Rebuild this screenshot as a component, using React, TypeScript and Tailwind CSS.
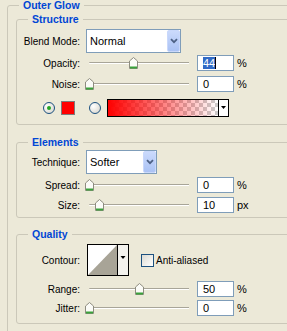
import React from 'react';

type SliderRowProps = {
  label: string;
  value: number;
  unit: string;
  selected?: boolean;
  className?: string;
};

const Label = ({ children }: { children: React.ReactNode }) => (
  <div className="w-[63px] shrink-0 text-right">{children}</div>
);

const Thumb = () => (
  <svg width="9" height="12" viewBox="0 0 9 12">
    <polygon points="0.5,4 4.5,0.5 8.5,4 8.5,11.5 0.5,11.5" fill="#fbfbf7" stroke="#8e8c80" />
    <rect x="1" y="9.5" width="7" height="2" fill="#3aa23a" />
  </svg>
);

const SliderRow = ({ label, value, unit, selected, className }: SliderRowProps) => (
  <div className={`flex h-[16px] items-center ${className ?? ''}`}>
    <Label>{label}</Label>
    <div className="relative ml-[6px] h-[16px] w-[111px] shrink-0">
      <div className="absolute left-[3px] top-[7px] h-[2px] w-[100px] rounded-l-full border-t border-[#a8a598] bg-white" />
      <div className="absolute top-[2px] h-[12px] w-[9px]" style={{ left: value - 1 }}>
        <Thumb />
      </div>
    </div>
    <div className="flex h-[16px] w-[37px] shrink-0 items-center border border-[#7f9db9] bg-white pl-[5px] text-[11px]">
      {selected ? (
        <>
          <span className="bg-[#316ac5] leading-[12px] text-white">{value}</span>
          <span className="h-[12px] w-[1px] bg-black" />
        </>
      ) : (
        <span>{value}</span>
      )}
    </div>
    <span className="ml-[3px] text-[11px]">{unit}</span>
  </div>
);

const Chevron = () => (
  <svg width="8" height="6" viewBox="0 0 8 6">
    <path d="M1 1.2 L4 4.2 L7 1.2" fill="none" stroke="#4d6185" strokeWidth="1.8" />
  </svg>
);

const Combo = ({ value, className }: { value: string; className: string }) => (
  <div className={`ml-[6px] flex h-[24px] shrink-0 items-center border border-[#7f9db9] bg-white text-[11px] ${className}`}>
    <span className="flex-1 pl-[3px]">{value}</span>
    <div className="flex h-[22px] w-[13px] items-center justify-center rounded-[2px] border border-[#c9d8fb] bg-gradient-to-b from-[#cbdafc] to-[#aac2f4]">
      <Chevron />
    </div>
  </div>
);

const Radio = ({ checked }: { checked?: boolean }) => (
  <svg width="12" height="12" viewBox="0 0 12 12">
    <defs>
      <radialGradient id={checked ? 'r1' : 'r2'} cx="0.35" cy="0.35" r="0.8">
        <stop offset="0" stopColor="#ffffff" />
        <stop offset="1" stopColor="#d6d4cb" />
      </radialGradient>
    </defs>
    <circle cx="6" cy="6" r="5.5" fill={`url(#${checked ? 'r1' : 'r2'})`} stroke="#1c5180" />
    {checked && <circle cx="6" cy="6" r="2" fill="#24a524" />}
  </svg>
);

const GradientPreview = () => (
  <svg width="122" height="18" viewBox="0 0 122 18">
    <defs>
      <pattern id="checker" width="8" height="8" patternUnits="userSpaceOnUse">
        <rect width="8" height="8" fill="#ffffff" />
        <rect width="4" height="4" fill="#cccccc" />
        <rect x="4" y="4" width="4" height="4" fill="#cccccc" />
      </pattern>
      <linearGradient id="fade" x1="0" x2="1" y1="0" y2="0">
        <stop offset="0" stopColor="#ff0000" stopOpacity="1" />
        <stop offset="1" stopColor="#ff0000" stopOpacity="0" />
      </linearGradient>
    </defs>
    <rect x="1" y="1" width="110" height="16" fill="url(#checker)" />
    <rect x="1" y="1" width="110" height="16" fill="url(#fade)" />
    <rect x="111" y="1" width="10" height="16" fill="#ffffff" />
    <line x1="111.5" y1="1" x2="111.5" y2="17" stroke="#000" />
    <polygon points="114,7 119,7 116.5,10" fill="#000" />
    <rect x="0.5" y="0.5" width="121" height="17" fill="none" stroke="#000" />
  </svg>
);

const ContourPreview = () => (
  <svg width="42" height="32" viewBox="0 0 42 32">
    <rect x="0.5" y="0.5" width="41" height="31" fill="#ffffff" />
    <polygon points="1,31 30,1 30,31" fill="#a8a497" />
    <rect x="31" y="1" width="10" height="30" fill="#f3f2ed" />
    <line x1="30.5" y1="1" x2="30.5" y2="31" stroke="#000" />
    <polygon points="33.5,12 38.5,12 36,15" fill="#000" />
    <rect x="0.5" y="0.5" width="41" height="31" fill="none" stroke="#000" />
  </svg>
);

type GroupProps = {
  title: string;
  className?: string;
  children: React.ReactNode;
};

// XP style group box: border with the title sitting over its top edge
const GroupBox = ({ title, className, children }: GroupProps) => (
  <div className={`relative rounded-[3px] border border-[#cbc8b9] ${className ?? ''}`}>
    <span className="absolute left-[11px] top-[-7px] bg-[#ece9d8] px-[4px] text-[10.5px] font-bold leading-[12px] text-[#0046d5]">
      {title}
    </span>
    {children}
  </div>
);

export default function App() {
  return (
    <div className="h-[331px] w-[287px] overflow-hidden bg-[#ece9d8] pt-[5px] font-['Liberation_Sans',Arial,sans-serif] text-[10px] leading-[13px] text-black">
      <GroupBox title="Outer Glow" className="ml-[7px] w-[320px] pb-[10px]">
        <GroupBox title="Structure" className="ml-[8px] mt-[13px] pb-[7px]">
          <div className="mt-[9px] flex items-center">
            <Label>Blend Mode:</Label>
            <Combo value="Normal" className="w-[95px]" />
          </div>
          <SliderRow className="mt-[2px]" label="Opacity:" value={44} unit="%" selected />
          <SliderRow className="mt-[5px]" label="Noise:" value={0} unit="%" />
          <div className="mt-[7px] flex h-[18px] items-center">
            <div className="ml-[26px] flex">
              <Radio checked />
            </div>
            <div className="ml-[6px] h-[14px] w-[14px] border border-[#7c7c7c] bg-[#ff0000]" />
            <div className="ml-[14px] flex">
              <Radio />
            </div>
            <div className="ml-[6px] flex">
              <GradientPreview />
            </div>
          </div>
        </GroupBox>

        <GroupBox title="Elements" className="ml-[8px] mt-[17px] pb-[4px]">
          <div className="mt-[7px] flex items-center">
            <Label>Technique:</Label>
            <Combo value="Softer" className="w-[71px]" />
          </div>
          <SliderRow className="mt-[3px]" label="Spread:" value={0} unit="%" />
          <SliderRow className="mt-[4px]" label="Size:" value={10} unit="px" />
        </GroupBox>

        <GroupBox title="Quality" className="ml-[8px] mt-[16px] pb-[7px]">
          <div className="mt-[9px] flex h-[32px] items-center">
            <Label>Contour:</Label>
            <div className="ml-[7px] flex">
              <ContourPreview />
            </div>
            <div className="ml-[12px] h-[13px] w-[13px] border border-[#1c5180] bg-gradient-to-br from-[#dcdbd3] to-[#ffffff]" />
            <span className="ml-[2px]">Anti-aliased</span>
          </div>
          <SliderRow className="mt-[5px]" label="Range:" value={50} unit="%" />
          <SliderRow className="mt-[3px]" label="Jitter:" value={0} unit="%" />
        </GroupBox>
      </GroupBox>
    </div>
  );
}
